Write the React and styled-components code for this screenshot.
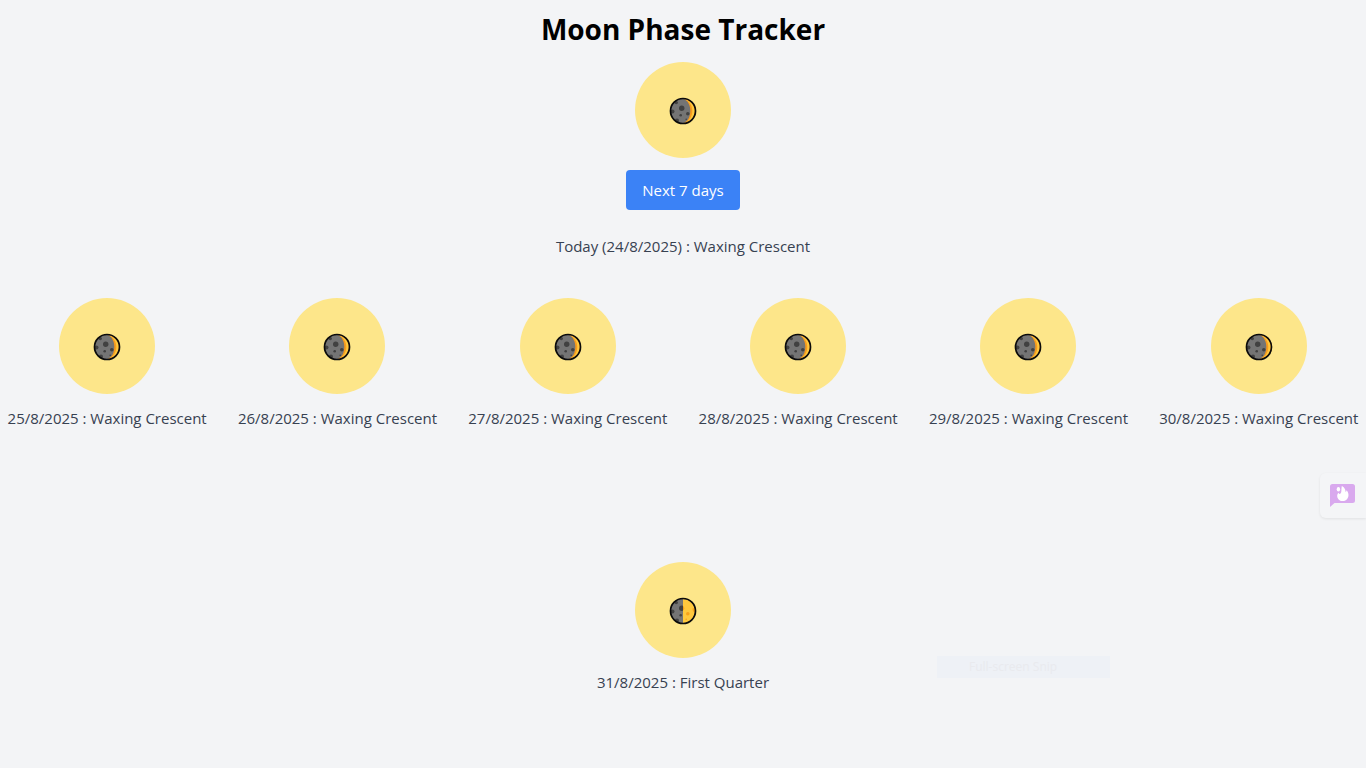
import React from "react";
import styled, { createGlobalStyle } from "styled-components";

const GlobalStyle = createGlobalStyle`
  *, *::before, *::after { box-sizing: border-box; }
  body {
    margin: 0;
    background: #f3f4f6;
    color: #000;
    font-family: "Segoe UI", "Open Sans", "Noto Sans", sans-serif;
    font-size: 15px;
    line-height: 24px;
  }
  h1, p, ul { margin: 0; padding: 0; }
`;

const Page = styled.main`
  min-height: 100vh;
  padding-top: 12px;
`;

const Today = styled.section`
  display: flex;
  flex-direction: column;
  align-items: center;
  gap: 12px;
`;

const Title = styled.h1`
  font-size: 28px;
  line-height: 34px;
  font-weight: 700;
  padding-bottom: 4px;
`;

const Disc = styled.div`
  display: flex;
  align-items: center;
  justify-content: center;
  width: 96px;
  height: 96px;
  padding-top: 2px;
  border-radius: 50%;
  background: #fde68a;
`;

const NextButton = styled.button`
  height: 40px;
  padding: 0 16px;
  border: 0;
  border-radius: 4px;
  background: #3b82f6;
  color: #fff;
  font: inherit;
  cursor: pointer;
`;

const PhaseText = styled.p`
  color: #374151;
  text-align: center;
  white-space: nowrap;
`;

const TodayText = styled(PhaseText)`
  padding-top: 12px;
`;

const DayList = styled.ul`
  display: flex;
  flex-wrap: wrap;
  justify-content: space-around;
  gap: 132px 16px;
  padding-top: 40px;
  list-style: none;
`;

const Day = styled.li`
  display: flex;
  flex-direction: column;
  align-items: center;
  gap: 12px;
  width: 202px;
`;

const FeedbackButton = styled.button`
  position: fixed;
  right: 0;
  bottom: 250px;
  display: flex;
  align-items: center;
  width: 46px;
  height: 45px;
  padding: 0 0 2px 10px;
  border: 0;
  border-radius: 6px 0 0 6px;
  background: #f4f5f7;
  box-shadow: 0 1px 3px rgba(0, 0, 0, 0.08);
  cursor: pointer;
`;

const SnipHint = styled.div`
  position: fixed;
  right: 256px;
  bottom: 90px;
  width: 173px;
  height: 22px;
  padding-left: 32px;
  background: #eef1f6;
  color: #e9eaee;
  font-size: 12px;
  line-height: 22px;
`;

function Moon({ phase }) {
  const quarter = phase === "First Quarter";
  return (
    <svg width="28" height="28" viewBox="0 0 28 28" role="img" aria-label={phase}>
      <circle cx="14" cy="14" r="12.5" fill="#747474" />
      <g fill="#414141">
        <circle cx="12.7" cy="11.2" r="2.7" />
        <circle cx="7.3" cy="5.6" r="1.7" />
        <circle cx="3.4" cy="14.5" r="2.1" />
        <circle cx="11.7" cy="18.2" r="1.3" />
        <circle cx="8" cy="23.4" r="2" />
        {!quarter && <circle cx="18.8" cy="16.8" r="1.8" />}
        {!quarter && <circle cx="17.2" cy="22.3" r="0.8" />}
      </g>
      {quarter ? (
        <>
          <path d="M14 2 A12 12 0 0 1 14 26 Z" fill="#ffc83d" />
          <g fill="#f7a21b">
            <path d="M14 9 A2.6 2.6 0 0 1 14 13.5 Z" />
            <circle cx="18.8" cy="16.8" r="1.8" />
            <circle cx="17.2" cy="22.3" r="0.8" />
            <path d="M23.5 11.5 L26 11 V15.5 Q23.5 15 23.5 11.5 Z" />
          </g>
        </>
      ) : (
        <>
          <path d="M15 2 A12 12 0 0 1 15 26 C23.5 22 23.5 6 15 2 Z" fill="#f79b1c" />
          <path d="M16 2.2 A12 12 0 0 1 16 25.8 C25.8 21.5 25.8 6.5 16 2.2 Z" fill="#ffc83d" />
        </>
      )}
      <circle cx="14" cy="14" r="12.5" fill="none" stroke="#0b0b0b" strokeWidth="1.7" />
    </svg>
  );
}

function FlameChatIcon() {
  return (
    <svg width="26" height="24" viewBox="0 0 26 24" aria-hidden="true">
      <path
        d="M2.5 1 H22.5 Q25 1 25 3.5 V17.5 Q25 20 22.5 20 H4.5 L0 24 V3.5 Q0 1 2.5 1 Z"
        fill="#d9a9ee"
      />
      <path
        d="M11.8 3 C15.5 5 15.5 7.5 15.6 9 C16.3 8.5 16.5 7.8 16.5 7.2 C19.2 10 19 14 17 16.2 C14.7 18.7 10.5 18.7 8.4 16.2 C6.6 14 6.8 11.2 8.6 9.8 C9 11 9.8 11.3 10.5 10.6 C12 9 11 6 11.8 3 Z"
        fill="#fff"
      />
      <ellipse cx="8.4" cy="6.2" rx="1.7" ry="2.3" fill="#fff" />
    </svg>
  );
}

const today = { date: "24/8/2025", phase: "Waxing Crescent" };

const days = [
  { date: "25/8/2025", phase: "Waxing Crescent" },
  { date: "26/8/2025", phase: "Waxing Crescent" },
  { date: "27/8/2025", phase: "Waxing Crescent" },
  { date: "28/8/2025", phase: "Waxing Crescent" },
  { date: "29/8/2025", phase: "Waxing Crescent" },
  { date: "30/8/2025", phase: "Waxing Crescent" },
  { date: "31/8/2025", phase: "First Quarter" },
];

export default function App() {
  return (
    <>
      <GlobalStyle />
      <Page>
        <Today>
          <Title>Moon Phase Tracker</Title>
          <Disc>
            <Moon phase={today.phase} />
          </Disc>
          <NextButton type="button">Next 7 days</NextButton>
          <TodayText>{`Today (${today.date}) : ${today.phase}`}</TodayText>
        </Today>
        <DayList>
          {days.map(({ date, phase }) => (
            <Day key={date}>
              <Disc>
                <Moon phase={phase} />
              </Disc>
              <PhaseText>{`${date} : ${phase}`}</PhaseText>
            </Day>
          ))}
        </DayList>
      </Page>
      <FeedbackButton type="button" aria-label="Feedback">
        <FlameChatIcon />
      </FeedbackButton>
      <SnipHint>Full-screen Snip</SnipHint>
    </>
  );
}
